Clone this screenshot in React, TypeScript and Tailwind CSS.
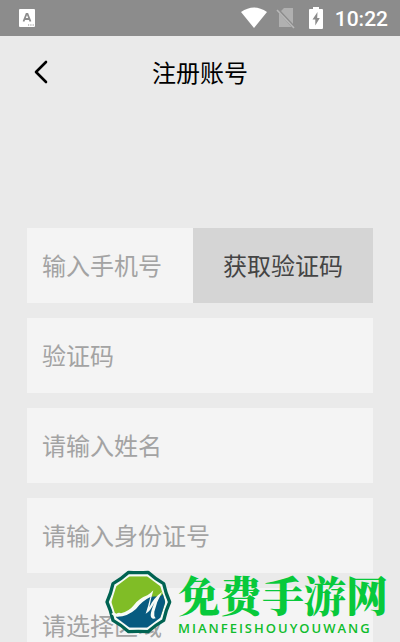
import React from "react";

const field =
  "block h-[75px] w-full min-w-0 appearance-none rounded-none border-0 bg-[#f4f4f4] px-[15px] pb-0.5 text-2xl text-[#333] outline-none placeholder:text-[#a3a3a3]";

function StatusBar() {
  return (
    <div className="flex h-9 items-center justify-between bg-[#8c8c8c] pr-3 pl-[19px] text-white">
      <svg className="h-[18px] w-4" viewBox="0 0 16 18" aria-hidden="true">
        <rect width="16" height="18" rx="1" fill="#fff" />
        <path d="M4.5 12.5 L7.5 5 H8.5 L11.5 12.5 M5.7 10 H10.3" fill="none" stroke="#8c8c8c" strokeWidth="1.8" />
        <path d="M9 16h1.2M11.3 16h1.2M13.6 16h1.2" stroke="#8c8c8c" strokeWidth="1.2" />
      </svg>
      <div className="flex items-center">
        <svg className="h-[22px] w-[26px]" viewBox="0 0 26 22" aria-hidden="true">
          <path d="M0 5 Q13 -4 26 5 L13 21 Z" fill="#fff" />
        </svg>
        <svg className="ml-[9px] h-[22px] w-5" viewBox="0 0 20 22" aria-hidden="true">
          <path d="M8 1 H17 V17 L5 4 Z M3 6 L15.5 20 H3 Z" fill="#b0b0b0" />
          <path d="M1 3 L18 21" stroke="#b8b8b8" strokeWidth="1.6" />
        </svg>
        <svg className="ml-[13px] h-[22px] w-[14px]" viewBox="0 0 14 22" aria-hidden="true">
          <path d="M4 0 H10 V2 H13 Q14 2 14 3 V21 Q14 22 13 22 H1 Q0 22 0 21 V3 Q0 2 1 2 H4 Z" fill="#fff" />
          <path d="M8.5 5 L3.5 12.5 H6.3 V18.5 L10.8 11 H8.2 Z" fill="#8c8c8c" />
        </svg>
        <span className="ml-3 pt-px font-[Roboto,sans-serif] text-[21px] leading-9 font-medium">10:22</span>
      </div>
    </div>
  );
}

function Watermark() {
  return (
    <div className="pointer-events-none absolute right-3 bottom-1.5 flex items-center gap-1.5">
      <svg className="h-[66px] w-[67px] shrink-0" viewBox="12 15 201 198" aria-hidden="true">
        <defs>
          <clipPath id="badge">
            <path d="M86 37 L138 37 L178 67 L193 114 L178 161 L138 191 L86 191 L46 161 L31 114 L46 67 Z" />
          </clipPath>
        </defs>
        <path
          d="M83 25 Q112 27 141 25 Q163 45 188 59 Q194 88 206 114 Q194 140 188 169 Q163 183 141 203 Q112 201 83 203 Q61 183 36 169 Q30 140 18 114 Q30 88 36 59 Q61 45 83 25 Z"
          fill="#f7fbf7"
          stroke="#006352"
          strokeWidth="10"
          strokeLinejoin="round"
        />
        <g clipPath="url(#badge)">
          <rect x="20" y="20" width="190" height="138" fill="#80bd26" />
          <path d="M20 163 Q74 158 98 130 Q120 108 145 98 L178 97 L196 80 L215 70 V210 H20 Z" fill="#075b80" />
        </g>
        <path
          d="M31 150 Q38 143 46 149 Q54 144 60 148 Q84 142 99 123 Q113 104 139 94 Q149 88 157 79 Q149 106 145 130 Q158 101 183 84 Q167 113 160 143 Q158 156 164 163 Q150 168 149 154 Q149 142 161 114 Q147 144 134 149 Q142 126 148 99 Q123 111 105 135 Q80 158 49 158 Q37 157 31 150 Z"
          fill="#f7fbf7"
        />
      </svg>
      <div>
        <div className="font-['Noto_Serif_CJK_SC','Noto_Sans_CJK_SC',serif] text-[42px] leading-[52px] font-black text-[#08c93b]">
          免费手游网
        </div>
        <div className="font-['Open_Sans',sans-serif] text-[13px] leading-4 font-semibold tracking-[2px] text-[#10bd2c]">
          MIANFEISHOUYOUWANG
        </div>
      </div>
    </div>
  );
}

export default function App() {
  return (
    <div className="relative h-screen overflow-hidden bg-[#eaeaea] font-['Noto_Sans_CJK_SC',sans-serif]">
      <StatusBar />
      <header className="grid h-[72px] grid-cols-[1fr_auto_1fr] items-center px-[27px]">
        <button type="button" aria-label="返回" className="flex h-9 w-8 items-center pl-[7px]">
          <svg className="h-6 w-[14px]" viewBox="0 0 14 24" fill="none" stroke="#000" strokeWidth="2.6" strokeLinecap="round" strokeLinejoin="round" aria-hidden="true">
            <path d="M12 2 L2 12 L12 22" />
          </svg>
        </button>
        <h1 className="text-2xl text-black">注册账号</h1>
      </header>
      <form className="mt-[120px] flex flex-col gap-[15px] px-[27px]">
        <div className="flex">
          <input type="tel" aria-label="手机号" placeholder="输入手机号" className={field} />
          <button type="button" className="h-[75px] w-[180px] shrink-0 bg-[#d5d5d5] pb-0.5 text-2xl text-[#444]">
            获取验证码
          </button>
        </div>
        <input type="text" aria-label="验证码" placeholder="验证码" className={field} />
        <input type="text" aria-label="姓名" placeholder="请输入姓名" className={field} />
        <input type="text" aria-label="身份证号" placeholder="请输入身份证号" className={field} />
        <select aria-label="区域" defaultValue="" className="block h-[75px] w-full appearance-none rounded-none border-0 bg-[#f4f4f4] px-[15px] pb-0.5 text-2xl text-[#a3a3a3] outline-none">
          <option value="">请选择区域</option>
        </select>
      </form>
      <Watermark />
    </div>
  );
}
